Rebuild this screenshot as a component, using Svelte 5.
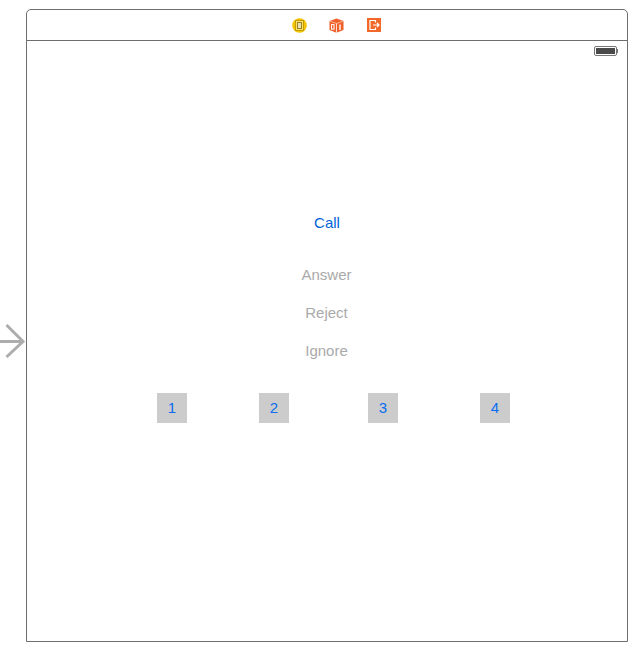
<script>
  const actions = ['Answer', 'Reject', 'Ignore'];
</script>

<div class="page">
  <svg class="arrow" width="26" height="36" viewBox="0 0 26 36" aria-hidden="true">
    <path d="M0 18.5H23M6.5 2L23 18.5L6.5 34" fill="none" stroke="#adadad" stroke-width="3"/>
  </svg>
  <div class="frame">
    <header class="dock">
      <svg width="15" height="15" viewBox="0 0 15 15" aria-hidden="true">
        <circle cx="7.5" cy="7.5" r="7.3" fill="#f5c400"/>
        <rect x="3.5" y="2.5" width="8" height="10" fill="#fbe06a" stroke="#c49c00"/>
        <rect x="5.5" y="4.5" width="4" height="6" fill="#e6dfb8" stroke="#9c8420"/>
      </svg>
      <svg width="15" height="15" viewBox="0 0 15 15" aria-hidden="true">
        <path d="M7.5 0.5L14.5 3V12L7.5 14.8L0.5 12V3Z" fill="#f0602a"/>
        <path d="M0.5 3L7.5 5.5L14.5 3" fill="none" stroke="#ffc9b0" stroke-width=".8"/>
        <path d="M7.5 5.5V14.8" stroke="#fff" stroke-width=".8"/>
        <rect x="2.6" y="6.6" width="2.4" height="4.6" fill="none" stroke="#fff"/>
        <path d="M11 6.5V12" stroke="#fff" stroke-width="1.4"/>
      </svg>
      <svg class="exit" width="14" height="14" viewBox="0 0 14 14" aria-hidden="true">
        <rect width="14" height="14" fill="#f2682a"/>
        <path d="M8.5 4.5V2.5H3V11.5H8.5V9.5" fill="none" stroke="#fff" stroke-width="1.2"/>
        <path d="M6 7H12M10 5L12 7L10 9" fill="none" stroke="#fff" stroke-width="1.2"/>
      </svg>
    </header>
    <div class="status">
      <div class="battery"><div class="charge"></div></div>
      <div class="nub"></div>
    </div>
    <main class="content">
      <button class="call">Call</button>
      <div class="actions">
        {#each actions as a}
          <button class="action">{a}</button>
        {/each}
      </div>
      <div class="digits">
        <button class="digit">1</button>
        <button class="digit second">2</button>
        <button class="digit third">3</button>
        <button class="digit fourth">4</button>
      </div>
    </main>
  </div>
</div>

<style>
  :global(body) {
    margin: 0;
    background: #fff;
    font-family: "Liberation Sans", Arial, sans-serif;
  }
  .page {
    position: relative;
    width: 640px;
    height: 654px;
    padding: 9px 12px 12px 26px;
    box-sizing: border-box;
    overflow: hidden;
  }
  .arrow {
    position: absolute;
    left: 0;
    top: 323px;
  }
  .frame {
    box-sizing: border-box;
    height: 633px;
    border: 1px solid #6e6e6e;
    border-radius: 5px 5px 0 0;
  }
  .dock {
    box-sizing: border-box;
    height: 31px;
    border-bottom: 1px solid #6e6e6e;
    display: flex;
    justify-content: center;
    align-items: center;
    gap: 22px;
    padding-left: 19px;
  }
  .exit {
    margin-left: 1px;
  }
  .status {
    height: 20px;
    display: flex;
    justify-content: flex-end;
    align-items: center;
    padding-right: 9px;
  }
  .battery {
    box-sizing: border-box;
    width: 23px;
    height: 10px;
    border: 1px solid #777;
    border-radius: 2px;
    padding: 1px;
  }
  .charge {
    height: 100%;
    background: #4a4a4a;
  }
  .nub {
    width: 1px;
    height: 4px;
    background: #777;
  }
  .content {
    display: flex;
    flex-direction: column;
  }
  button {
    border: 0;
    padding: 0;
    background: none;
    font: 15px "Liberation Sans", Arial, sans-serif;
  }
  .call {
    align-self: center;
    margin-top: 151px;
    height: 20px;
    color: #0064d8;
  }
  .actions {
    margin-top: 32px;
    display: flex;
    flex-direction: column;
    align-items: center;
    gap: 18px;
  }
  .action {
    height: 20px;
    padding-right: 1px;
    color: #aaaaaa;
  }
  .digits {
    margin-top: 33px;
    padding-left: 130px;
    display: flex;
  }
  .digit {
    width: 30px;
    height: 30px;
    padding-bottom: 2px;
    background: #cccccc;
    color: #0a6cf0;
  }
  .second { margin-left: 72px; }
  .third { margin-left: 79px; }
  .fourth { margin-left: 82px; }
</style>
